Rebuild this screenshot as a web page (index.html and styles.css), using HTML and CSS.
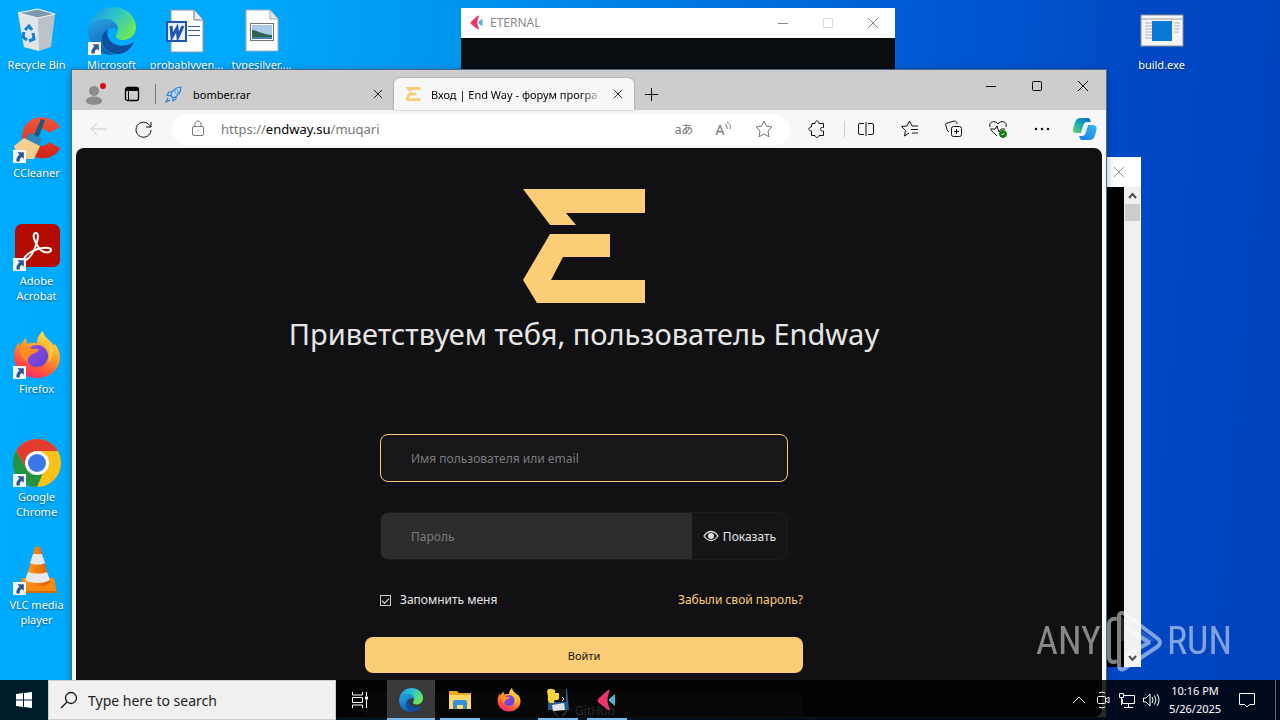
FILE: index.html
```html
<!DOCTYPE html>
<html lang="en">
<head>
    <meta charset="UTF-8">
    <meta name="viewport" content="width=device-width, initial-scale=1.0">
    <title>Desktop</title>
    <link rel="stylesheet" href="styles.css">
</head>
<body>
    <!-- shared icons -->
    <svg class="defs" width="0" height="0" aria-hidden="true">
        <defs>
            <linearGradient id="edge-a" x1="0" y1="0" x2="1" y2="0.6">
                <stop offset="0" stop-color="#1b8fe0"/>
                <stop offset="0.5" stop-color="#2bc3cf"/>
                <stop offset="1" stop-color="#6be85a"/>
            </linearGradient>
            <linearGradient id="edge-b" x1="0" y1="0" x2="0.4" y2="1">
                <stop offset="0" stop-color="#2aa6e6"/>
                <stop offset="1" stop-color="#0b62b8"/>
            </linearGradient>
            <linearGradient id="fox-a" x1="0.8" y1="0" x2="0.3" y2="1">
                <stop offset="0" stop-color="#fff04f"/>
                <stop offset="0.45" stop-color="#ff9a28"/>
                <stop offset="0.8" stop-color="#ff4a3f"/>
                <stop offset="1" stop-color="#f0287c"/>
            </linearGradient>
            <linearGradient id="fox-b" x1="0" y1="0" x2="1" y2="1">
                <stop offset="0" stop-color="#9a4be8"/>
                <stop offset="1" stop-color="#5b3fd0"/>
            </linearGradient>
            <linearGradient id="cop-a" x1="0" y1="1" x2="1" y2="0">
                <stop offset="0" stop-color="#6bd66a"/>
                <stop offset="0.5" stop-color="#12a9b8"/>
                <stop offset="1" stop-color="#1460c8"/>
            </linearGradient>
            <linearGradient id="cop-b" x1="0" y1="1" x2="1" y2="0">
                <stop offset="0" stop-color="#1e7be8"/>
                <stop offset="1" stop-color="#33b9f5"/>
            </linearGradient>
            <linearGradient id="cc-a" x1="0" y1="0" x2="0" y2="1">
                <stop offset="0" stop-color="#f0563a"/>
                <stop offset="1" stop-color="#cf2417"/>
            </linearGradient>
            <linearGradient id="vlc-a" x1="0" y1="0" x2="1" y2="0">
                <stop offset="0" stop-color="#ffa02e"/>
                <stop offset="0.5" stop-color="#f57c0a"/>
                <stop offset="1" stop-color="#d65f00"/>
            </linearGradient>

            <symbol id="shortcut" viewBox="0 0 12 12">
                <rect width="12" height="12" fill="#f4f7fb"/>
                <path d="M4 2h6v6L8.200 6.400C6.500 7.400 6 8.500 6.300 10.500H3.200C2.800 8 4 5.700 6 4.200z" fill="#2d5793"/>
            </symbol>

            <symbol id="edge" viewBox="0 0 48 48">
                <path d="M1 20C3 8 13 0 25 0c13 0 23 9 23 20 0 8-6 13-13 13-5 0-7-2-7-4 0-2 2-3 2-7 0-5-5-10-13-10C9 12 3 15 1 20z" fill="url(#edge-a)"/>
                <path d="M0 24C1 16 8 12 16 12c8 0 14 5 14 10-8-3-15 2-15 10 0 8 5 14 12 16C11 49 0 38 0 24z" fill="url(#edge-b)"/>
                <path d="M20 22c-7 4-8 14-2 20 6 7 20 8 27-5 1-2 0-2-1-1-8 5-19 3-23-4-2-4-2-7-1-10z" fill="#0f4f9e"/>
            </symbol>

            <symbol id="firefox" viewBox="0 0 48 48">
                <path d="M24 47C10 47 1 37 1 25c0-6 2-10 5-14l1 4c1-3 3-5 6-8l1 6c4-2 8-1 10-1 0-5 2-9 6-12 1 6 5 8 9 12l2 3v-3c4 5 6 9 6 14 0 12-10 21-23 21z" fill="url(#fox-a)"/>
                <circle cx="24" cy="25" r="11" fill="url(#fox-b)"/>
                <path d="M7 17c5-3 9-2 12 1h7c-1 3-4 4-7 5-2 2-5 3-4 8-5-2-8-8-8-14z" fill="#ff8e1f"/>
                <path d="M31 13c6 4 7 12 4 18 5-3 6-10 5-15-3-1-6-2-9-3z" fill="#ffc933"/>
            </symbol>

            <symbol id="flet" viewBox="0 0 20 22">
                <path d="M11 1 2 9c-2 2-2 3 0 5l9 7c2 1 2-1 1-3-2-5-2-9 0-14 1-2 1-4-1-3z" fill="#ee3167"/>
                <path d="M18 5v12l-6-5v-2z" fill="#52b5d6"/>
            </symbol>

            <symbol id="close" viewBox="0 0 12 12">
                <path d="M1 1l10 10M11 1L1 11" fill="none" stroke="currentColor"/>
            </symbol>

            <symbol id="endway" viewBox="0 0 122 114">
                <path d="M0 0h122v24H43l10 12H27zM27 45h60v23H40L28 91h94v23H14L0 91z" fill="currentColor"/>
            </symbol>
        </defs>
    </svg>

    <div class="desktop">
        <div class="icons">
            <div class="shortcut">
                <svg class="pic" viewBox="0 0 48 48">
                    <path d="M5 6l20-4 17 5-4 33-12 4-15-4z" fill="#b9c3c9"/>
                    <path d="M5 6l20 5 1 33-15-4z" fill="#dfe5e8"/>
                    <path d="M5 6l20-4 17 5-17 4z" fill="#7d9bb0" stroke="#f4f8fa"/>
                    <path d="M12 23l4-4 3 4M20 26l1 6-5 2M14 33l-4-3 1-5" fill="none" stroke="#1480d2" stroke-width="3"/>
                </svg>
                <span>Recycle Bin</span>
            </div>
            <div class="shortcut">
                <svg class="pic"><use href="#edge"/></svg>
                <svg class="arrow"><use href="#shortcut"/></svg>
                <span>Microsoft Edge</span>
            </div>
            <div class="shortcut file">
                <svg class="pic" viewBox="0 0 48 48">
                    <path d="M8 3h23l9 10v32H8z" fill="#fff" stroke="#8d9aa5"/>
                    <path d="M31 3v10h9" fill="#e8edf2" stroke="#6d7985"/>
                    <path d="M25 19.500h12M25 23.500h12M25 28.500h12" stroke="#2a5fb5"/>
                    <rect x="3" y="14" width="21" height="21" fill="#1f55b3"/>
                    <rect x="5" y="16" width="17" height="17" fill="#e9f0fa"/>
                    <path d="M8 19l1 11 5-9 1 9 5-11" fill="none" stroke="#1f55b3" stroke-width="3"/>
                </svg>
                <span>probablyven...</span>
            </div>
            <div class="shortcut file">
                <svg class="pic" viewBox="0 0 48 48">
                    <path d="M8 3h24l8 9v32H8z" fill="#fdfdfd" stroke="#a5afb8"/>
                    <path d="M32 3v9h8" fill="#e1e6ea" stroke="#a5afb8"/>
                    <rect x="12.500" y="16.500" width="23" height="17" fill="#fff" stroke="#6c757d"/>
                    <path d="M14 18h20v14H14z" fill="#a9c8ea"/>
                    <path d="M14 23c5 0 9 4 20 5v4H14z" fill="#2e6550"/>
                    <path d="M14 30h20v2H14z" fill="#4b7fa8"/>
                </svg>
                <span>typesilver....</span>
            </div>
            <div class="shortcut first">
                <svg class="pic" viewBox="0 0 48 48">
                    <path d="M47 12C39-1 15-2 10 16c-6 20 16 34 31 24 3-2 5-4 6-7l-11-6c-4 6-15 5-16-4-1-8 11-13 16-5z" fill="url(#cc-a)"/>
                    <path d="M28 4l4 1-7 19-5-2z" fill="#22577d"/>
                    <path d="M16 18l13 5-3 9-14-6z" fill="#2f86bd"/>
                    <path d="M11 23l16 8-6 13H5L1 31z" fill="#f5cf90"/>
                </svg>
                <svg class="arrow"><use href="#shortcut"/></svg>
                <span>CCleaner</span>
            </div>
            <div class="shortcut first">
                <svg class="pic" viewBox="0 0 48 48">
                    <rect x="2" y="1" width="45" height="43" rx="7" fill="#b30b00"/>
                    <path d="M23 10c-5 0-1 10 3 15 4 6 12 5 12 2 0-4-14-2-20 2-7 4-9 9-5 8 4-2 8-9 10-15 2-5 3-12 0-12z" fill="none" stroke="#fff" stroke-width="2"/>
                </svg>
                <svg class="arrow"><use href="#shortcut"/></svg>
                <span>Adobe Acrobat</span>
            </div>
            <div class="shortcut first">
                <svg class="pic"><use href="#firefox"/></svg>
                <svg class="arrow"><use href="#shortcut"/></svg>
                <span>Firefox</span>
            </div>
            <div class="shortcut first">
                <svg class="pic" viewBox="0 0 48 48">
                    <circle cx="24" cy="24" r="24" fill="#fbc116"/>
                    <path d="M24 24 14 30 3 12C12-4 36-4 45 12H24z" fill="#e33b2e"/>
                    <path d="M3 12l11 18c3 5 9 7 16 4l-6 14C5 48-6 28 3 12z" fill="#229342"/>
                    <circle cx="24" cy="24" r="12" fill="#fff"/>
                    <circle cx="24" cy="24" r="9" fill="#3a78e7"/>
                </svg>
                <svg class="arrow"><use href="#shortcut"/></svg>
                <span>Google Chrome</span>
            </div>
            <div class="shortcut first">
                <svg class="pic" viewBox="0 0 48 48">
                    <path d="M9 31h32l3 15H4z" fill="#f58a12"/>
                    <path d="M4 44h40v2H4z" fill="#d66a00"/>
                    <path d="M22 0h5l10 35c-3 6-22 6-25 0z" fill="url(#vlc-a)"/>
                    <path d="M20 7h9l3 9c-4 2-11 2-15 0zM15 25c6 2 14 2 19 0l3 8c-6 4-19 4-25 0z" fill="#e9e9e9"/>
                </svg>
                <svg class="arrow"><use href="#shortcut"/></svg>
                <span>VLC media player</span>
            </div>
        </div>

        <div class="icons icons-right">
            <div class="shortcut">
                <svg class="pic" viewBox="0 0 48 48">
                    <rect x="3" y="8" width="42" height="31" fill="#f5f5f5" stroke="#8a8f94"/>
                    <path d="M4 12h40" stroke="#9aa0a6"/>
                    <path d="M7 16h10M7 19h9M7 22h10M7 25h8M7 28h10M7 31h8M36 16h6M36 19h6M36 22h6M36 25h5" stroke="#aab0b6"/>
                    <rect x="14" y="14" width="20" height="20" fill="#0a78d7"/>
                </svg>
                <span>build.exe</span>
            </div>
        </div>

        <section class="window eternal">
            <header class="caption">
                <svg class="app-icon"><use href="#flet"/></svg>
                <span class="caption-text">ETERNAL</span>
                <button aria-label="Minimize"><svg viewBox="0 0 12 12"><path d="M1 6.500h10" stroke="currentColor"/></svg></button>
                <button class="faint" aria-label="Maximize"><svg viewBox="0 0 12 12"><rect x="1.500" y="1.500" width="9" height="9" fill="none" stroke="currentColor"/></svg></button>
                <button aria-label="Close"><svg><use href="#close"/></svg></button>
            </header>
        </section>

        <section class="window console">
            <header class="caption">
                <button aria-label="Close"><svg><use href="#close"/></svg></button>
            </header>
            <div class="console-body">
                <div class="scrollbar">
                    <svg viewBox="0 0 17 17"><path d="M5 11l3.500-4 3.500 4" fill="none" stroke="#505050" stroke-width="2"/></svg>
                    <div class="thumb"></div>
                    <svg viewBox="0 0 17 17"><path d="M5 6l3.500 4L12 6" fill="none" stroke="#505050" stroke-width="2"/></svg>
                </div>
            </div>
        </section>

        <section class="window browser">
            <header class="tabs">
                <button class="tab-tool" aria-label="Profile">
                    <svg width="24" height="24" viewBox="0 0 24 24"><circle cx="12" cy="9" r="5" fill="#8b8b8b"/><path d="M4 19c0-6 16-6 16 0 0 5-16 5-16 0z" fill="#8b8b8b"/><circle cx="21" cy="4" r="3" fill="#d80c18"/></svg>
                </button>
                <button class="tab-tool" aria-label="Workspaces">
                    <svg width="16" height="16" viewBox="0 0 16 16"><rect x="1.500" y="1.500" width="13" height="13" rx="2" fill="none" stroke="#000" stroke-width="1.300"/><path d="M2 2h12v3H2z"/><path d="M4.500 5v9" stroke="#000"/></svg>
                </button>
                <div class="tab">
                    <svg width="18" height="18" viewBox="0 0 18 18"><path d="M6 11C6 6 11 2 16 2c0 5-3 9-8 11zM7 7H4l-2 3 4 1M11 11v3l-3 2V13M3 13l-2 4 4-2" fill="#b9d8f5" stroke="#2c7fd0" stroke-width="1.200"/><circle cx="11.500" cy="6.500" r="1.500" fill="#fff" stroke="#2c7fd0"/></svg>
                    <span class="tab-title">bomber.rar</span>
                    <button aria-label="Close tab"><svg><use href="#close"/></svg></button>
                </div>
                <div class="tab active">
                    <svg class="favicon" width="16" height="14"><use href="#endway"/></svg>
                    <span class="tab-title">Вход | End Way - форум програ</span>
                    <button aria-label="Close tab"><svg><use href="#close"/></svg></button>
                </div>
                <button class="new-tab" aria-label="New tab"><svg width="15" height="15" viewBox="0 0 15 15"><path d="M7.500 1v13M1 7.500h13" stroke="#000"/></svg></button>
                <div class="controls">
                    <button aria-label="Minimize"><svg viewBox="0 0 12 12"><path d="M1 6.500h10" stroke="#000"/></svg></button>
                    <button aria-label="Maximize"><svg viewBox="0 0 12 12"><rect x="1.500" y="1.500" width="9" height="9" rx="1" fill="none" stroke="#000"/></svg></button>
                    <button aria-label="Close"><svg><use href="#close"/></svg></button>
                </div>
            </header>

            <nav class="toolbar">
                <button class="back" aria-label="Back"><svg viewBox="0 0 20 20"><path d="M18 10H2M8 4l-6 6 6 6"/></svg></button>
                <button aria-label="Reload"><svg viewBox="0 0 20 20"><path d="M17.500 8A7.500 7.500 0 1 0 18 11M18 3v5h-5"/></svg></button>
                <div class="address">
                    <svg viewBox="0 0 20 20"><rect x="4.500" y="7.500" width="11" height="9" rx="1.500"/><path d="M7 7V5c0-4 6-4 6 0v2M9.500 12h1"/></svg>
                    <div class="url" role="textbox" aria-label="Address">https://<b>endway.su</b>/muqari</div>
                    <button class="translate" aria-label="Translate">aあ</button>
                    <button class="read" aria-label="Read aloud">A<svg viewBox="0 0 8 10"><path d="M1 3c2 1 2 3 2 5M3 1c3 2 4 4 3 7"/></svg></button>
                    <button aria-label="Add to favorites"><svg viewBox="0 0 20 20"><path d="M10 2l2.500 5.200 5.500.8-4 4 1 5.800-5-2.800-5 2.800L6 12 2 8l5.500-.8z"/></svg></button>
                </div>
                <button class="ext" aria-label="Extensions"><svg viewBox="0 0 20 20"><path d="M5 4.500h3c0-3.500 4-3.500 4 0h4.500v4c-4-1-4 4.500 0 3.500v4.500H12c0 2.500-4 2.500-4 0H4.500V12c-3.500 0-3.500-4 0-4z"/></svg></button>
                <button class="split" aria-label="Split screen"><svg viewBox="0 0 20 20"><path d="M8 4.500H4q-1.500 0-1.500 1.500v8q0 1.500 1.500 1.500h4M12 4.500h4q1.500 0 1.500 1.500v8q0 1.500-1.500 1.500h-4M10 3v14"/></svg></button>
                <button aria-label="Favorites"><svg viewBox="0 0 20 20"><path d="M9 14l-4.500 3 1-5.500-4-4 5.500-.5 2.500-5L12 7h6M11 10.500h7M12 14h6"/></svg></button>
                <button aria-label="Collections"><svg viewBox="0 0 20 20"><rect x="7.500" y="7.500" width="10" height="10" rx="2"/><path d="M12.500 10v5M10 12.500h5M5 13c-2-1-2-3-3-6-1-2 0-3 2-3l6-2c2 0 3 1 3 3"/></svg></button>
                <button aria-label="Browser essentials"><svg viewBox="0 0 20 20"><path d="M2 8c-2-6 6-7 8-3 2-4 10-3 8 3M3 11l6 6M2 10h5l2-3 2 6 2-3h4"/><circle cx="15" cy="15" r="3.500" fill="#107c10" stroke="#107c10"/><path d="M13.500 15l1 1 2-2" stroke="#fff"/></svg></button>
                <button aria-label="Settings and more"><svg viewBox="0 0 20 20"><path d="M4 10h.01M10 10h.01M16 10h.01" stroke-width="2.500" stroke-linecap="round"/></svg></button>
                <button class="copilot" aria-label="Copilot"><svg viewBox="0 0 24 24"><path d="M7 1h8c2 0 2 2 3 4h-4c-2 0-3 1-4 4l-2 7H3c-3 0-4-2-2-7 1-4 2-8 6-8z" fill="url(#cop-a)"/><path d="M17 23H9c-2 0-2-2-3-4h3c2 0 3-1 4-4l2-7h5c4 0 4 3 3 7-1 4-2 8-6 8z" fill="url(#cop-b)"/></svg></button>
            </nav>

            <main class="page" lang="ru">
                <svg class="logo" viewBox="0 0 122 114"><use href="#endway"/></svg>
                <h1>Приветствуем тебя, пользователь Endway</h1>
                <form class="login">
                    <input class="field" type="text" placeholder="Имя пользователя или email" aria-label="Имя пользователя или email">
                    <div class="password">
                        <input type="password" placeholder="Пароль" aria-label="Пароль">
                        <button type="button">
                            <svg width="16" height="14" viewBox="0 0 16 14"><path d="M1 7c4-6 10-6 14 0-4 6-10 6-14 0z" fill="none" stroke="#ddd" stroke-width="1.300"/><circle cx="8" cy="7" r="3" fill="#ddd"/></svg>
                            Показать
                        </button>
                    </div>
                    <div class="options">
                        <label><input type="checkbox" checked>Запомнить меня</label>
                        <a href="#">Забыли свой пароль?</a>
                    </div>
                    <button class="submit" type="submit">Войти</button>
                    <button class="github" type="button">
                        <svg width="14" height="14" viewBox="0 0 16 16"><path d="M8 0a8 8 0 0 0-2.500 15.600v-2c-2 .4-2.500-1-3-1.600 1 0 1.500 1.500 3 1C3 12.500 2 9.500 3.200 5.500L3 3l2.500 1h5L13 3l-.2 2.500c1.200 4 .2 7-2.300 7.500v2.600A8 8 0 0 0 8 0z" fill="#fff"/></svg>
                        GitHub
                    </button>
                </form>
            </main>
        </section>

        <div class="watermark">
            <span>ANY</span>
            <svg width="56" height="62" viewBox="0 0 56 62"><path d="M11 9c-4-1-8 1-8 5v33c0 5 4 6 8 4M13 6v50c0 3 2 4 5 3l33-22c4-3 4-6 0-9L19 4c-3-2-6-1-6 2zM19 17l25 16M19 46l25-14" fill="none" stroke="#fff" stroke-width="4"/><path d="M15 6l35 25H14z" fill="#fff" opacity=".25"/></svg>
            <span>RUN</span>
        </div>

        <footer class="taskbar">
            <button class="start" aria-label="Start"><svg width="16" height="16" viewBox="0 0 16 16"><path d="M0 2l7-1v6.500H0zM8 1l8-1v7.500H8zM0 8.500h7V15l-7-1zM8 8.500h8V16l-8-1z" fill="#fff"/></svg></button>
            <label class="search">
                <svg width="18" height="18" viewBox="0 0 18 18"><circle cx="11" cy="7" r="5.500" fill="none" stroke="#111" stroke-width="1.300"/><path d="M7 11l-6 6" stroke="#111" stroke-width="1.300"/></svg>
                <input type="text" placeholder="Type here to search" aria-label="Search">
            </label>
            <div class="apps">
                <button class="task-view" aria-label="Task View"><svg width="18" height="16" viewBox="0 0 18 16"><path d="M1.500 0v3h10V0M1.500 5.500h10v5h-10zM1.500 16v-3h10v3M15.500 0v4M15.500 8v8" fill="none" stroke="#fff"/><path d="M14 4.500h3v3h-3z" fill="#fff"/></svg></button>
                <button class="current" aria-label="Microsoft Edge"><svg width="24" height="24"><use href="#edge"/></svg></button>
                <button class="running" aria-label="File Explorer"><svg width="22" height="20" viewBox="0 0 22 20"><path d="M0 1h8l2 2h12v15H0z" fill="#e8a820"/><path d="M0 5h22v14H0z" fill="#ffd968"/><path d="M4 19v-7q0-2 2-2h10q2 0 2 2v7h-4v-4H8v4z" fill="#3590d5"/></svg></button>
                <button aria-label="Firefox"><svg width="24" height="24"><use href="#firefox"/></svg></button>
                <button class="running" aria-label="build.exe"><svg width="22" height="24" viewBox="0 0 22 24"><path d="M9 1h11l2 21H1V12z" fill="#285b91"/><path d="M8 1h11v13H8z" fill="#111"/><path d="M5 17l12-2 1 7-12 1z" fill="#dfe3e8"/><path d="M0 3q1-3 5-2l3 1v3h4v5q0 2-3 2H7v3H3q-3-2-2-6z" fill="#ffd43b"/><path d="M15 9l2 2-2 2" fill="none" stroke="#fff"/></svg></button>
                <button class="running" aria-label="ETERNAL"><svg width="20" height="22"><use href="#flet"/></svg></button>
            </div>
            <div class="tray">
                <button aria-label="Show hidden icons"><svg viewBox="0 0 18 18"><path d="M3 12l6-6 6 6"/></svg></button>
                <button aria-label="Meet Now"><svg viewBox="0 0 18 18"><rect x="3.500" y="5.500" width="8" height="7" rx="1"/><path d="M12 8l3-2v6l-3-2M5 2q3-2 6 0M5 16q3 2 6 0"/></svg></button>
                <button aria-label="Network"><svg viewBox="0 0 18 18"><path d="M5 4.500h11.500v8H4.500V8M10.500 13v3M6 16.500h9M1.500 2.500h4v4h-4zM3.500 7v7"/></svg></button>
                <button aria-label="Volume"><svg viewBox="0 0 18 18"><path d="M1.500 7v4H4l4 4V3L4 7zM10 6q2 3 0 6M12.500 4.500q3 4.500 0 9M15 3q4 6 0 12"/></svg></button>
                <div class="clock"><span>10:16 PM</span><span>5/26/2025</span></div>
                <button class="notify" aria-label="Notifications"><svg viewBox="0 0 18 18"><path d="M1.500 2.500h15v11h-5L9 16l-2.500-2.500h-5z"/></svg></button>
                <button class="show-desktop" aria-label="Show desktop"></button>
            </div>
        </footer>
    </div>
</body>
</html>
```
FILE: styles.css
```css
* {
    margin: 0;
    padding: 0;
    box-sizing: border-box;
}

body {
    font-family: "Noto Sans", "Noto Sans CJK JP", sans-serif;
    font-size: 12px;
}

button,
input {
    font: inherit;
    color: inherit;
    border: none;
    background: none;
    outline: none;
}

button {
    display: flex;
    align-items: center;
    justify-content: center;
    cursor: pointer;
}

.defs {
    position: absolute;
}

.desktop {
    position: relative;
    height: 100vh;
    overflow: hidden;
    background: linear-gradient(95deg, #00acff 0%, #00a8fc 18%, #0098f0 32%, #0076e2 52%, #0058d2 70%, #0049c6 85%, #0040ba 100%);
}

/* desktop shortcuts */
.icons {
    display: grid;
    grid-template-columns: repeat(4, 75px);
    grid-auto-rows: 108px;
    padding-top: 7px;
    width: 300px;
}

.icons-right {
    position: absolute;
    top: 0;
    right: 80px;
    grid-template-columns: 75px;
    width: 75px;
}

.shortcut {
    position: relative;
    display: flex;
    flex-direction: column;
    align-items: center;
    padding: 0 3px 0 1px;
    color: #fff;
    font-size: 11px;
    line-height: 15px;
    text-align: center;
    text-shadow: 0 1px 2px rgba(0,0,0,0.5);
}

.shortcut.first {
    grid-column: 1;
}

.shortcut.file span {
    white-space: nowrap;
}

.pic {
    width: 48px;
    height: 48px;
    margin-bottom: 2px;
}

.arrow {
    position: absolute;
    left: 13px;
    top: 35px;
    width: 13px;
    height: 13px;
}

/* windows */
.window {
    position: absolute;
    display: flex;
    flex-direction: column;
}

.caption {
    display: flex;
    align-items: center;
    flex: none;
    height: 30px;
    background: #fff;
    color: #888;
}

.caption button {
    width: 45px;
    height: 28px;
}

.caption button svg,
.controls svg {
    width: 12px;
    height: 12px;
}

.tab button svg {
    width: 10px;
    height: 10px;
}

.caption .faint {
    color: #ddd;
}

.app-icon {
    width: 14px;
    height: 15px;
    margin: 0 6px 2px 9px;
}

.caption-text {
    flex: 1;
    line-height: 28px;
}

.eternal {
    left: 461px;
    top: 8px;
    width: 434px;
    height: 300px;
    background: #0b0e11;
}

.console {
    right: 139px;
    top: 157px;
    bottom: 53px;
    width: 640px;
    background: #000;
}

.console .caption {
    justify-content: flex-end;
    color: #999;
}

.console-body {
    display: flex;
    flex: 1;
    justify-content: flex-end;
}

.scrollbar {
    display: flex;
    flex-direction: column;
    width: 17px;
    background: #f0f0f0;
}

.scrollbar svg {
    width: 17px;
    height: 17px;
}

.thumb {
    height: 17px;
    margin: 0 1px auto;
    background: #cdcdcd;
}

/* browser */
.browser {
    left: 71px;
    right: 173px;
    top: 69px;
    bottom: 2px;
    border: 1px solid #4b6a86;
    background: #f7f7f7;
    box-shadow: 0 2px 8px rgba(0,0,0,0.3);
}

.tabs {
    display: flex;
    align-items: flex-end;
    flex: none;
    height: 40px;
    padding-left: 3px;
    background: #cdcdcd;
}

.tab-tool {
    width: 38px;
    height: 32px;
}

.tab {
    display: flex;
    align-items: center;
    width: 240px;
    height: 32px;
    padding: 0 11px 0 11px;
    gap: 10px;
    border-radius: 6px 6px 0 0;
    font-size: 11px;
}

.tab:not(.active) {
    position: relative;
    width: 239px;
    padding-left: 10px;
    margin-left: 4px;
}

.tab:not(.active)::before {
    content: "";
    position: absolute;
    left: 0;
    width: 1px;
    height: 20px;
    background: #777;
}

.tab.active {
    background: #f7f7f7;
    box-shadow: 0 0 2px rgba(0,0,0,0.4);
}

.tab-title {
    flex: 1;
    min-width: 0;
    white-space: nowrap;
}

.active .tab-title {
    -webkit-mask-image: linear-gradient(90deg, #000 88%, transparent);
    mask-image: linear-gradient(90deg, #000 88%, transparent);
}

.favicon {
    color: #f9cc76;
}

.new-tab {
    width: 35px;
    height: 32px;
}

.controls {
    display: flex;
    align-self: flex-start;
    margin-left: auto;
}

.controls button {
    width: 46px;
    height: 31px;
}

.toolbar {
    display: flex;
    align-items: center;
    flex: none;
    height: 38px;
    padding-left: 5px;
}

.toolbar button {
    flex: none;
    width: 44px;
    height: 30px;
}

.toolbar svg {
    width: 20px;
    height: 20px;
    fill: none;
    stroke: #111;
}

.toolbar .back svg {
    stroke: #ccc;
}

.address {
    display: flex;
    align-items: center;
    flex: 1;
    height: 31px;
    margin: 0 5px 0 7px;
    padding: 0 6px 0 16px;
    border-radius: 16px;
    background: #fff;
    color: #767676;
    font-size: 13px;
}

.address svg,
.address button svg {
    stroke: #767676;
}

.address button {
    width: 40px;
}

.address .translate {
    font-size: 12px;
}

.address .read {
    font-size: 14px;
}

.address .read svg {
    width: 8px;
    height: 10px;
    margin-bottom: 6px;
}

.url {
    flex: 1;
    margin-left: 13px;
}

.url b {
    font-weight: normal;
    color: #000;
}

.toolbar .split {
    position: relative;
    margin-left: 5px;
}

.split::before {
    content: "";
    position: absolute;
    left: 0;
    width: 1px;
    height: 16px;
    background: #ccc;
}

.toolbar .copilot {
    width: 42px;
}

.toolbar .copilot svg {
    width: 24px;
    height: 24px;
    stroke: none;
}

.page {
    display: flex;
    flex: 1;
    flex-direction: column;
    align-items: center;
    min-height: 0;
    margin: 0 4px;
    padding: 41px 10px 0 0;
    overflow: hidden;
    border-radius: 8px;
    background: #111114;
    color: #e6e6e6;
}

.logo {
    flex: none;
    width: 122px;
    height: 114px;
    color: #fbcd77;
}

h1 {
    margin-top: 9px;
    font-size: 29px;
    font-weight: normal;
    line-height: 44px;
    white-space: nowrap;
}

.login {
    display: flex;
    flex-direction: column;
    flex: none;
    width: 438px;
    margin-top: 78px;
}

.field,
.password {
    height: 48px;
    margin: 0 15px 30px;
    border-radius: 8px;
}

.login ::placeholder {
    color: #7c7c7c;
    opacity: 1;
}

.field {
    padding: 0 30px;
    border: 1px solid #fbcd77;
    background: #17171a;
}

.password {
    display: flex;
    overflow: hidden;
    border: 1px solid #1c1c1e;
    background: #151517;
}

.password input {
    flex: 1;
    min-width: 0;
    padding: 0 30px;
    background: #2d2d2d;
}

.password button {
    width: 95px;
    gap: 4px;
}

.options {
    display: flex;
    justify-content: space-between;
    height: 20px;
    line-height: 20px;
    padding-left: 15px;
}

.options label {
    display: flex;
    align-items: center;
    gap: 9px;
}

.options input {
    display: grid;
    place-items: center;
    width: 11px;
    height: 11px;
    appearance: none;
    border: 1px solid #ccc;
}

.options input:checked::before {
    content: "";
    width: 6px;
    height: 3px;
    border: solid #eee;
    border-width: 0 0 1px 1px;
    transform: rotate(-45deg);
}

.options a {
    color: #fbcd77;
    text-decoration: none;
}

.submit,
.github {
    height: 36px;
    border-radius: 8px;
}

.submit {
    margin: 27px 0 19px;
    background: #fbcd77;
    color: #111;
    font-size: 11px;
}

.github {
    gap: 8px;
    background: #2d2d2d;
}

/* watermark */
.watermark {
    position: absolute;
    right: 48px;
    bottom: 48px;
    display: flex;
    align-items: center;
    gap: 5px;
    color: #fff;
    font-family: "Liberation Sans Narrow", "Roboto Condensed", "DejaVu Sans Condensed", sans-serif;
    font-size: 38px;
    opacity: 0.5;
}

/* taskbar */
.taskbar {
    position: absolute;
    left: 0;
    right: 0;
    bottom: 0;
    display: flex;
    height: 40px;
    background: rgba(0,0,0,0.84);
    color: #fff;
}

.start {
    width: 48px;
}

.search {
    display: flex;
    align-items: center;
    width: 288px;
    padding-left: 11px;
    gap: 10px;
    border: 1px solid #ccc;
    background: #f0f0f0;
}

.search input {
    flex: 1;
    min-width: 0;
    font-size: 14px;
}

.search ::placeholder {
    color: #222;
    opacity: 1;
}

.apps {
    display: flex;
    gap: 1px;
    padding-left: 2px;
}

.apps button {
    position: relative;
    width: 48px;
}

.apps .task-view {
    padding-right: 4px;
}

.apps .current {
    background: #3a3a3a;
}

.running::after,
.current::after {
    content: "";
    position: absolute;
    left: 4px;
    right: 4px;
    bottom: 0;
    height: 2px;
    background: #76b9ed;
}

.current::after {
    left: 0;
    right: 0;
}

.tray {
    display: flex;
    margin-left: auto;
}

.tray button {
    width: 24px;
}

.tray svg {
    width: 18px;
    height: 18px;
    fill: none;
    stroke: #fff;
}

.clock {
    display: flex;
    flex-direction: column;
    justify-content: center;
    width: 64px;
    font-size: 11px;
    line-height: 18px;
    text-align: center;
}

.tray .notify {
    width: 40px;
    margin-right: 8px;
}

.tray .show-desktop {
    width: 5px;
    border-left: 1px solid #666;
}
```
